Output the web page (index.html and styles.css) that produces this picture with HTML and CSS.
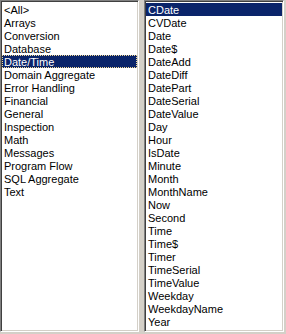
FILE: index.html
```html
<!DOCTYPE html>
<html>
<head>
<meta charset="utf-8">
<link rel="stylesheet" href="styles.css">
</head>
<body>
<div class="panes">
  <ul class="listbox categories">
    <li class="item">&lt;All&gt;</li>
    <li class="item">Arrays</li>
    <li class="item">Conversion</li>
    <li class="item">Database</li>
    <li class="item selected focused">Date/Time</li>
    <li class="item">Domain Aggregate</li>
    <li class="item">Error Handling</li>
    <li class="item">Financial</li>
    <li class="item">General</li>
    <li class="item">Inspection</li>
    <li class="item">Math</li>
    <li class="item">Messages</li>
    <li class="item">Program Flow</li>
    <li class="item">SQL Aggregate</li>
    <li class="item">Text</li>
  </ul>
  <ul class="listbox functions">
    <li class="item selected">CDate</li>
    <li class="item">CVDate</li>
    <li class="item">Date</li>
    <li class="item">Date$</li>
    <li class="item">DateAdd</li>
    <li class="item">DateDiff</li>
    <li class="item">DatePart</li>
    <li class="item">DateSerial</li>
    <li class="item">DateValue</li>
    <li class="item">Day</li>
    <li class="item">Hour</li>
    <li class="item">IsDate</li>
    <li class="item">Minute</li>
    <li class="item">Month</li>
    <li class="item">MonthName</li>
    <li class="item">Now</li>
    <li class="item">Second</li>
    <li class="item">Time</li>
    <li class="item">Time$</li>
    <li class="item">Timer</li>
    <li class="item">TimeSerial</li>
    <li class="item">TimeValue</li>
    <li class="item">Weekday</li>
    <li class="item">WeekdayName</li>
    <li class="item">Year</li>
  </ul>
</div>
</body>
</html>
```

FILE: styles.css
```css
html, body {
  margin: 0;
  padding: 0;
  background: #d4d0c8;
}

body {
  font-family: "Liberation Sans", Arial, sans-serif;
  font-size: 11px;
  color: #000;
}

.panes {
  display: flex;
  gap: 5px;
  height: 332px;
  width: 284px;
}

.listbox {
  list-style: none;
  margin: 0;
  padding: 2px 1px 1px;
  box-sizing: border-box;
  background: #fff;
  border: 1px solid;
  border-color: #808080 #ffffff #ffffff #808080;
  box-shadow: inset 1px 1px 0 #404040, inset -1px -1px 0 #d4d0c8;
  overflow: hidden;
}

.categories {
  width: 139px;
}

.functions {
  width: 140px;
}

.item {
  height: 13px;
  line-height: 11px;
  padding: 2px 2px 0;
  white-space: nowrap;
  box-sizing: border-box;
}

.item.selected {
  background: #0a246a;
  color: #fff;
}

.item.focused {
  outline: 1px dotted #f5db95;
  outline-offset: -1px;
}
```
